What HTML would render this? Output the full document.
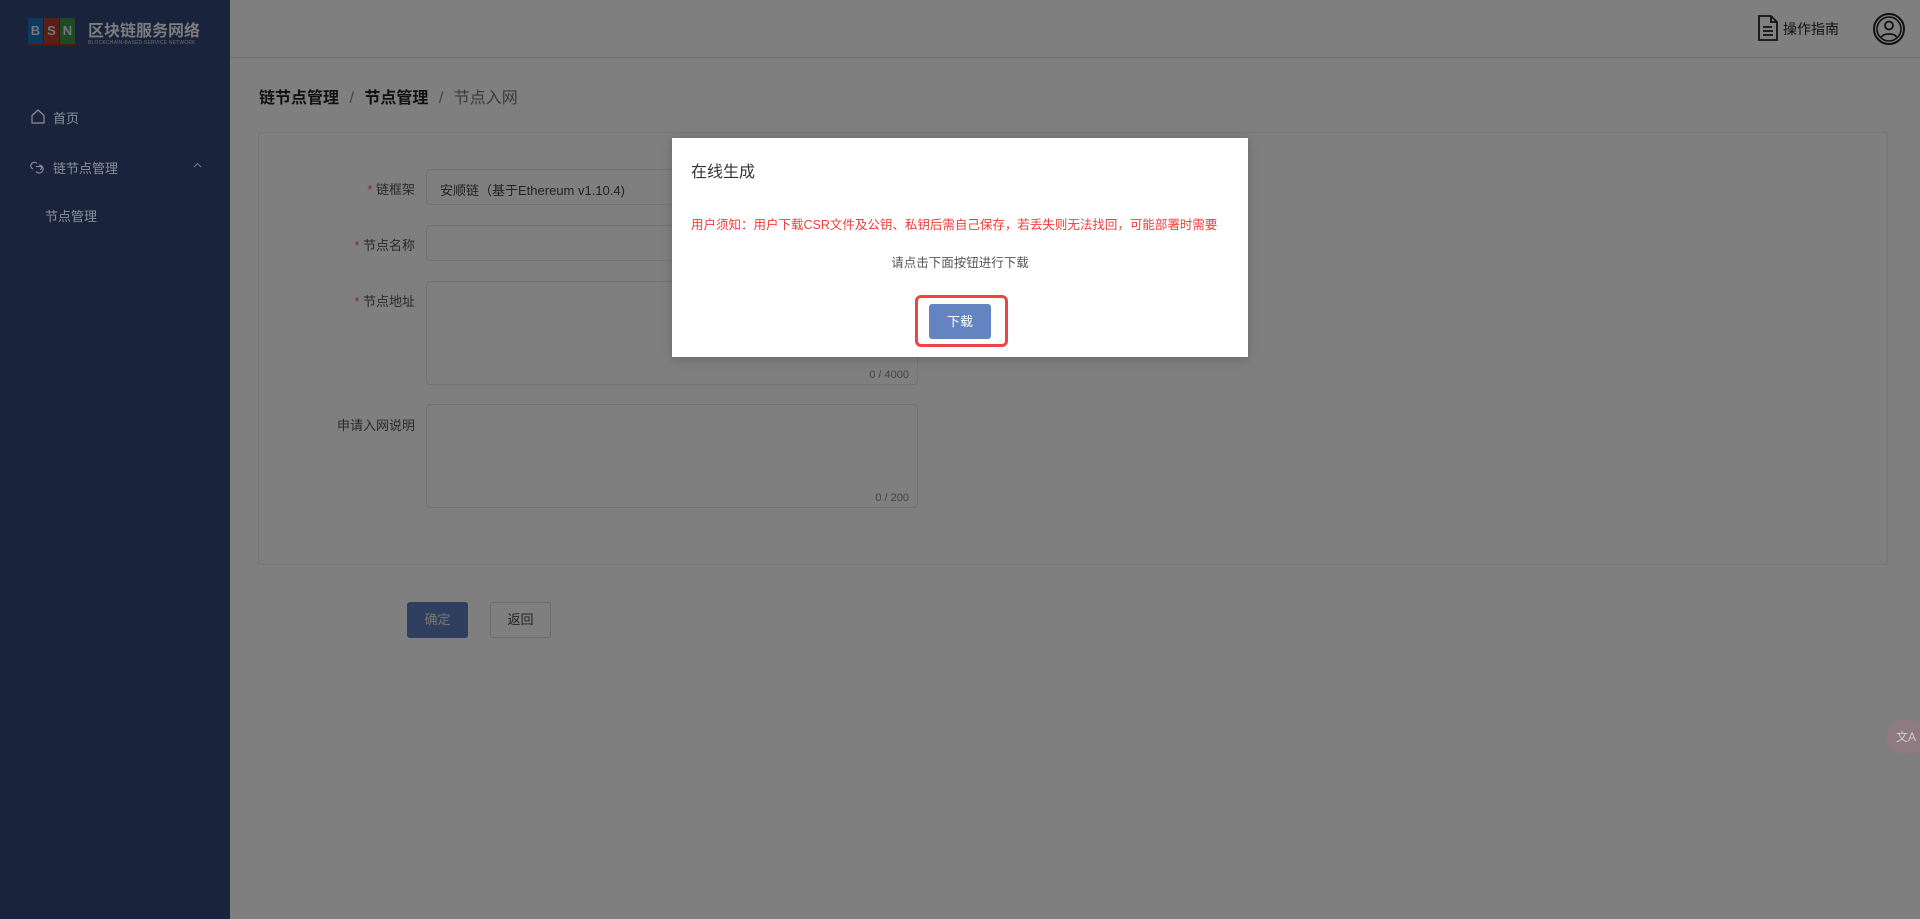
<!DOCTYPE html>
<html><head><meta charset="utf-8"><style>
*{box-sizing:border-box;margin:0;padding:0}
body{width:1920px;height:919px;overflow:hidden;background:#7f7f7f;font-family:"Liberation Sans","Noto Sans CJK SC",sans-serif;position:relative}
.side{position:absolute;left:0;top:0;width:230px;height:919px;background:#19243c}
.abs{position:absolute}
.hdr{position:absolute;left:230px;top:0;right:0;height:58px;border-bottom:1px solid #747474}
.card{position:absolute;left:258px;top:132px;width:1630px;height:433px;border:1px solid #767676;border-radius:4px}
.lbl{position:absolute;right:1505px;font-size:13px;color:#2a2a2a;text-align:right}
.lbl b{color:#7a2a2a;font-weight:normal}
.inp{position:absolute;left:426px;width:492px;border:1px solid #747474;border-radius:4px}
.cnt{position:absolute;right:8px;bottom:3px;font-size:11px;color:#444}
</style></head><body>
<div class="side">
  <div class="abs" style="left:28px;top:18px;width:47px;height:28px">
    <div class="abs" style="left:0;top:0;width:15px;height:26px;background:#0d3a5c;color:#777;font:bold 13px 'Liberation Sans';text-align:center;line-height:26px">B</div>
    <div class="abs" style="left:16px;top:0;width:15px;height:26px;background:#5a1e16;color:#777;font:bold 13px 'Liberation Sans';text-align:center;line-height:26px">S</div>
    <div class="abs" style="left:32px;top:0;width:15px;height:26px;background:#1b4a25;color:#777;font:bold 13px 'Liberation Sans';text-align:center;line-height:26px">N</div>
    <div class="abs" style="left:0;top:26px;width:47px;height:2px;background:#5a1414"></div>
  </div>
  <div class="abs" style="left:88px;top:17px;font-size:16px;font-weight:bold;color:#7c7c7c">区块链服务网络</div>
  <div class="abs" style="left:88px;top:40px;font-size:5px;color:#6c6c6c;letter-spacing:0.2px">BLOCKCHAIN-BASED SERVICE NETWORK</div>
  <svg class="abs" style="left:31px;top:109px" width="14" height="15" viewBox="0 0 14 15"><path d="M1 6.5L7 1l6 5.5V14H1z" fill="none" stroke="#8a8f99" stroke-width="1.2"/></svg>
  <div class="abs" style="left:53px;top:108px;font-size:13px;color:#8a8f99">首页</div>
  <svg class="abs" style="left:30px;top:160px" width="16" height="15" viewBox="0 0 16 15"><path d="M7 3.5A3.5 3.5 0 1 0 3 9M9 5a4 4 0 1 1-3 6.5M6 6.5h4a1.5 1.5 0 0 1 0 3" fill="none" stroke="#8a8f99" stroke-width="1.1"/></svg>
  <div class="abs" style="left:53px;top:158px;font-size:13px;color:#8a8f99">链节点管理</div>
  <svg class="abs" style="left:193px;top:162px" width="9" height="6" viewBox="0 0 9 6"><path d="M1 5l3.5-3.5L8 5" fill="none" stroke="#777" stroke-width="1"/></svg>
  <div class="abs" style="left:45px;top:206px;font-size:13px;color:#8a8f99">节点管理</div>
</div>
<div class="hdr">
  <svg class="abs" style="left:1527px;top:15px" width="22" height="26" viewBox="0 0 22 26"><path d="M2 1h12l6 6v18H2z M14 1v6h6 M6 12h9 M6 16h10 M6 20h10" fill="none" stroke="#111" stroke-width="1.8"/></svg>
  <div class="abs" style="left:1553px;top:19px;font-size:14px;color:#111">操作指南</div>
  <svg class="abs" style="left:1642px;top:12px" width="34" height="34" viewBox="0 0 34 34"><circle cx="17" cy="17" r="15" fill="none" stroke="#111" stroke-width="2"/><circle cx="17" cy="17" r="12" fill="none" stroke="#111" stroke-width="1.6"/><circle cx="17" cy="13.5" r="4" fill="none" stroke="#111" stroke-width="1.8"/><path d="M9.5 25c2-4 13-4 15 0" fill="none" stroke="#111" stroke-width="1.8"/></svg>
</div>
<div class="abs" style="left:259px;top:84px;font-size:16px;color:#111"><b>链节点管理</b> <span style="color:#444;margin:0 6px">/</span> <b>节点管理</b> <span style="color:#444;margin:0 6px">/</span> <span style="color:#3a3a3a">节点入网</span></div>
<div class="card"></div>
<div class="lbl" style="top:179px"><b>*</b> 链框架</div>
<div class="inp" style="top:169px;height:36px"><div class="abs" style="left:13px;top:10px;font-size:13px;color:#222">安顺链（基于Ethereum v1.10.4)</div></div>
<div class="lbl" style="top:235px"><b>*</b> 节点名称</div>
<div class="inp" style="top:225px;height:36px"></div>
<div class="lbl" style="top:291px"><b>*</b> 节点地址</div>
<div class="inp" style="top:281px;height:104px"><div class="cnt">0 / 4000</div></div>
<div class="lbl" style="top:415px">申请入网说明</div>
<div class="inp" style="top:404px;height:104px"><div class="cnt">0 / 200</div></div>
<div class="abs" style="left:407px;top:602px;width:61px;height:36px;background:#2f3f5f;border-radius:3px;color:#777;font-size:13px;text-align:center;line-height:36px">确定</div>
<div class="abs" style="left:490px;top:602px;width:61px;height:36px;border:1px solid #6c6c6c;border-radius:3px;color:#222;font-size:13px;text-align:center;line-height:34px">返回</div>
<div class="abs" style="left:1886px;top:720px;width:40px;height:34px;border-radius:17px;background:#8e7a80;color:#ccc;font-size:12px;line-height:34px;padding-left:10px">文A</div>
<div class="abs" style="left:672px;top:138px;width:576px;height:219px;background:#fff;box-shadow:0 2px 10px rgba(0,0,0,.2)">
  <div class="abs" style="left:19px;top:20px;font-size:16px;color:#333">在线生成</div>
  <div class="abs" style="left:19px;top:76px;font-size:12.5px;color:#f23c3c;white-space:nowrap">用户须知：用户下载CSR文件及公钥、私钥后需自己保存，若丢失则无法找回，可能部署时需要</div>
  <div class="abs" style="left:0;width:576px;top:114px;font-size:12.5px;color:#555;text-align:center">请点击下面按钮进行下载</div>
  <div class="abs" style="left:243px;top:157px;width:93px;height:52px;border:3px solid #f04444;border-radius:6px"></div>
  <div class="abs" style="left:257px;top:166px;width:62px;height:35px;background:#6384c0;border-radius:3px;color:#fff;font-size:13px;text-align:center;line-height:35px">下载</div>
</div>
</body></html>
